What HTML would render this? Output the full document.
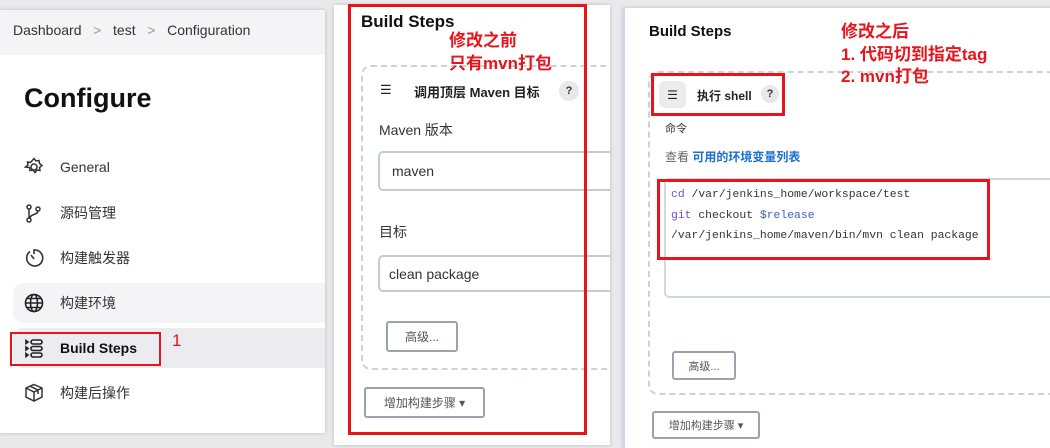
<!DOCTYPE html>
<html><head><meta charset="utf-8"><style>
*{margin:0;padding:0;box-sizing:border-box}
body{width:1050px;height:445px;overflow:hidden;background:#e9e9ec;font-family:"Liberation Sans","Noto Sans CJK SC",sans-serif;position:relative;color:#222}
.a{position:absolute}
.p{background:#fff;box-shadow:0 0 4px rgba(0,0,0,.2)}
.red{border:3px solid #e8141c}
.rt{color:#e8141c;font-weight:bold;font-size:17px;line-height:22.5px}
.nav{left:24px;font-size:14px;color:#333;display:flex;align-items:center;gap:14px}
.inp{border:2px solid #c5cbd2;border-radius:5px;font-size:14px;color:#333;padding-left:12px;display:flex;align-items:center}
.btn{border:2px solid #9aa3ad;border-radius:3px;font-size:12px;color:#555;display:flex;align-items:center;justify-content:center}
.q{width:20px;height:20px;border-radius:50%;background:#e8e8ea;font-size:11px;font-weight:bold;display:flex;align-items:center;justify-content:center;color:#333}
.mono{font-family:"Liberation Mono","DejaVu Sans Mono",monospace;font-size:11.4px;line-height:20.5px;color:#333}
</style></head><body>
<div class="a p" style="left:0;top:10px;width:325px;height:423px"></div>
<div class="a" style="left:0;top:10px;width:325px;height:45px;background:#f4f4f6"></div>
<div class="a" style="left:13px;top:22px;font-size:14px;color:#333">Dashboard &nbsp;&nbsp;<span style="color:#999">&gt;</span>&nbsp;&nbsp; test &nbsp;&nbsp;<span style="color:#999">&gt;</span>&nbsp;&nbsp; Configuration</div>
<div class="a" style="left:24px;top:83px;font-size:27px;font-weight:bold;color:#111">Configure</div>
<div class="a nav" style="top:157px"><svg width="20" height="20" viewBox="0 0 20 20" fill="none" stroke="#333" stroke-width="1.5"><circle cx="10" cy="10" r="3"/><path d="M10 1.5l2 2.5 3-.5.5 3 2.5 2-2.5 2 .5 3-3-.5-2 2.5-2-2.5-3 .5-.5-3L1.5 10 4 8l-.5-3 3 .5z"/></svg><span style="margin-left:2px">General</span></div>
<div class="a nav" style="top:203px"><svg width="20" height="20" viewBox="0 0 20 20" fill="none" stroke="#333" stroke-width="1.5"><circle cx="5" cy="4" r="2"/><circle cx="5" cy="17" r="2"/><circle cx="14" cy="6" r="2"/><path d="M5 6v9M14 8c0 4-8 3-8 7"/></svg><span style="margin-left:2px">源码管理</span></div>
<div class="a nav" style="top:248px"><svg width="20" height="20" viewBox="0 0 20 20" fill="none" stroke="#333" stroke-width="1.6"><path d="M6 3.5A8 8 0 1 0 10 2v4"/><path d="M7 7l3 4"/></svg><span style="margin-left:2px">构建触发器</span></div>
<div class="a" style="left:13px;top:283px;width:312px;height:40px;background:#f4f4f6;border-radius:10px 0 0 10px"></div>
<div class="a nav" style="top:293px"><svg width="20" height="20" viewBox="0 0 20 20" fill="none" stroke="#222" stroke-width="1.6"><circle cx="10" cy="10" r="8.5"/><ellipse cx="10" cy="10" rx="3.5" ry="8.5"/><path d="M1.5 10h17M3 5.5h14M3 14.5h14"/></svg><span style="margin-left:2px">构建环境</span></div>
<div class="a" style="left:13px;top:328px;width:312px;height:40px;background:#ebebf0;border-radius:10px 0 0 10px"></div>
<div class="a nav" style="top:338px;font-weight:bold;color:#111"><svg width="20" height="20" viewBox="0 0 20 20" fill="none" stroke="#222" stroke-width="1.6"><path d="M2 2.5l2 1.5-2 1.5zM2 9l2 1.5L2 12zM2 15.5l2 1.5-2 1.5z" fill="#222"/><rect x="7" y="2" width="11" height="4" rx="2"/><rect x="7" y="8.5" width="11" height="4" rx="2"/><rect x="7" y="15" width="11" height="4" rx="2"/></svg><span style="margin-left:2px">Build Steps</span></div>
<div class="a red" style="left:10px;top:332px;width:151px;height:34px;border-width:2.5px"></div>
<div class="a" style="left:172px;top:331px;color:#e8141c;font-size:17px">1</div>
<div class="a nav" style="top:383px"><svg width="20" height="20" viewBox="0 0 20 20" fill="none" stroke="#333" stroke-width="1.5"><path d="M10 1.5l8 3.5v9l-8 4-8-4V5z"/><path d="M2 5l8 4 8-4M10 9v9.5M6 3.2l8 3.8v4"/></svg><span style="margin-left:2px">构建后操作</span></div>

<div class="a p" style="left:334px;top:5px;width:276px;height:440px;overflow:hidden">
<div class="a" style="left:27px;top:60px;width:260px;height:305px;border:2px dashed #cdd2d6;border-radius:10px;border-right:none"></div>
<div class="a inp" style="left:44px;top:146px;width:240px;height:40px;border-right:none">maven</div>
<div class="a inp" style="left:44px;top:250px;width:240px;height:37px;border-right:none;padding-left:9px">clean package</div>
</div>
<div class="a" style="left:361px;top:12px;font-size:17px;font-weight:bold;color:#111">Build Steps</div>
<div class="a" style="left:380px;top:82px;font-size:13px;line-height:16px">☰</div>
<div class="a" style="left:414px;top:82px;font-size:13px;font-weight:bold;color:#222">调用顶层 Maven 目标</div>
<div class="a q" style="left:559px;top:81px">?</div>
<div class="a" style="left:379px;top:120px;font-size:14px;color:#333">Maven 版本</div>
<div class="a" style="left:379px;top:222px;font-size:14px;color:#333">目标</div>
<div class="a btn" style="left:386px;top:321px;width:72px;height:31px">高级...</div>
<div class="a btn" style="left:364px;top:387px;width:121px;height:31px">增加构建步骤 ▾</div>
<div class="a red" style="left:348px;top:4px;width:239px;height:431px"></div>
<div class="a rt" style="left:449px;top:30px">修改之前<br>只有mvn打包</div>

<div class="a p" style="left:623px;top:8px;width:430px;height:440px;border-left:2px solid #c9d8f0"></div>
<div class="a" style="left:649px;top:23px;font-size:15px;font-weight:bold;color:#111">Build Steps</div>
<div class="a" style="left:648px;top:71px;width:410px;height:324px;border:2px dashed #cdd2d6;border-radius:10px;border-right:none"></div>
<div class="a" style="left:659px;top:81px;width:27px;height:27px;background:#ececee;border-radius:6px;font-size:12px;display:flex;align-items:center;justify-content:center">☰</div>
<div class="a" style="left:697px;top:87px;font-size:12px;font-weight:bold">执行 shell</div>
<div class="a q" style="left:761px;top:85px;width:18px;height:18px">?</div>
<div class="a red" style="left:651px;top:73px;width:134px;height:43px"></div>
<div class="a" style="left:665px;top:120px;font-size:11px;color:#333">命令</div>
<div class="a" style="left:665px;top:148px;font-size:12px;color:#666">查看 <span style="color:#1a6fd1;font-weight:bold">可用的环境变量列表</span></div>
<div class="a" style="left:664px;top:178px;width:400px;height:120px;border:2px solid #d3d8dd;border-radius:5px"></div>
<div class="a mono" style="left:671px;top:185px"><span style="color:#6a4fcf">cd</span> /var/jenkins_home/workspace/test<br><span style="color:#6a4fcf">git</span> checkout <span style="color:#3a5fd0">$release</span><br>/var/jenkins_home/maven/bin/mvn clean package</div>
<div class="a red" style="left:657px;top:179px;width:333px;height:81px"></div>
<div class="a btn" style="left:672px;top:351px;width:64px;height:29px;font-size:11px">高级...</div>
<div class="a btn" style="left:652px;top:411px;width:108px;height:28px;font-size:11px">增加构建步骤 ▾</div>
<div class="a rt" style="left:841px;top:21px">修改之后<br>1. 代码切到指定tag<br>2. mvn打包</div>
</body></html>
